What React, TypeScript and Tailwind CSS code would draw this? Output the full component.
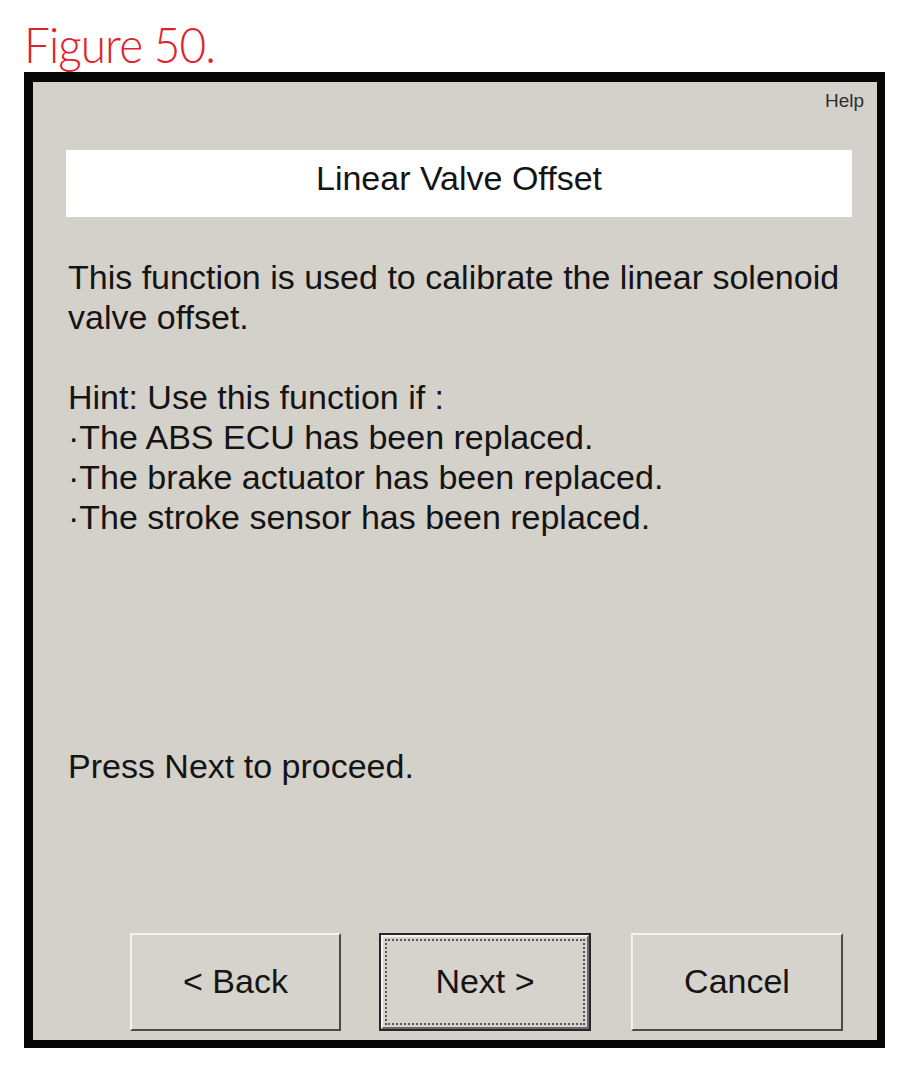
const sans = { fontFamily: '"Liberation Sans", Arial, sans-serif' };

function WinButton({ label, focused = false, className = '' }: { label: string; focused?: boolean; className?: string }) {
  if (focused) {
    return (
      <div className={`h-[98px] border-2 border-[#262626] ${className}`}>
        <div className="h-full border-2 border-t-[#f4f3ef] border-l-[#f4f3ef] border-r-[#6a6a6a] border-b-[#6a6a6a] bg-[#d6d3cd] p-[2px]">
          <div className="h-full border-2 border-dotted border-[#555] flex items-center justify-center text-[34px] text-[#151515] pb-[2px]">
            {label}
          </div>
        </div>
      </div>
    );
  }
  return (
    <div
      className={`h-[98px] border-2 border-t-[#f4f3ef] border-l-[#f4f3ef] border-r-[#4a4a4a] border-b-[#4a4a4a] bg-[#d6d3cd] flex items-center justify-center text-[34px] text-[#151515] pb-[2px] ${className}`}
    >
      {label}
    </div>
  );
}

export default function App() {
  return (
    <div className="w-[912px] h-[1068px] bg-white overflow-hidden" style={sans}>
      <div className="h-[72px] pl-[24px] pt-[19px]">
        <span
          className="inline-block origin-left scale-x-[0.92] text-[50px] leading-none text-[#e3212b] font-light tracking-[-1px]"
          style={{ fontFamily: 'Lato, "Open Sans", sans-serif' }}
        >
          Figure 50.
        </span>
      </div>

      <div className="ml-[24px] w-[861px] h-[976px] bg-[#060606] pt-[10px] pl-[9px] pr-[8px] pb-[8px]">
        <div className="h-full bg-[#d4d0ca] flex flex-col text-[#141414]">
          <div className="pt-[9px] pr-[13px] flex justify-end">
            <span className="text-[19px] leading-[19px] text-[#2e2e2e]">Help</span>
          </div>

          <div className="mt-[40px] ml-[33px] mr-[25px] h-[67px] pb-[12px] bg-white flex items-center justify-center">
            <span className="text-[34px] leading-[40px]">Linear Valve Offset</span>
          </div>

          <div className="mt-[40px] pl-[35px] text-[34px] leading-[40px]">
            <p>This function is used to calibrate the linear solenoid</p>
            <p>valve offset.</p>
            <p className="h-[40px]"></p>
            <p>Hint: Use this function if :</p>
            <p>·The ABS ECU has been replaced.</p>
            <p>·The brake actuator has been replaced.</p>
            <p>·The stroke sensor has been replaced.</p>
          </div>

          <p className="mt-[209px] pl-[35px] text-[34px] leading-[40px]">Press Next to proceed.</p>

          <div className="mt-[147px] pl-[97px] flex">
            <WinButton label="< Back" className="w-[211px]" />
            <WinButton label="Next >" focused className="w-[212px] ml-[38px]" />
            <WinButton label="Cancel" className="w-[212px] ml-[40px]" />
          </div>
        </div>
      </div>
    </div>
  );
}
